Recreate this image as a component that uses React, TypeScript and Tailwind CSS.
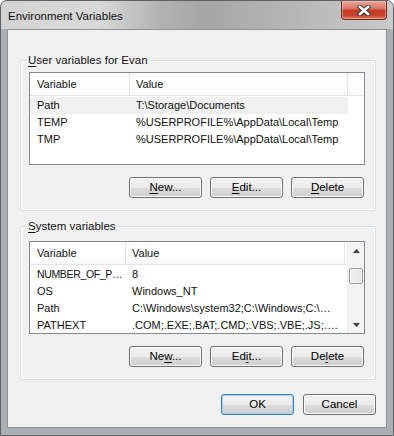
import React from 'react'

type Row = { name: string; value: string; selected?: boolean; tight?: boolean }

const userVars: Row[] = [
  { name: 'Path', value: 'T:\\Storage\\Documents', selected: true },
  { name: 'TEMP', value: '%USERPROFILE%\\AppData\\Local\\Temp' },
  { name: 'TMP', value: '%USERPROFILE%\\AppData\\Local\\Temp' },
]

const systemVars: Row[] = [
  { name: 'NUMBER_OF_P…', value: '8', tight: true },
  { name: 'OS', value: 'Windows_NT' },
  { name: 'Path', value: 'C:\\Windows\\system32;C:\\Windows;C:\\…' },
  { name: 'PATHEXT', value: '.COM;.EXE;.BAT;.CMD;.VBS;.VBE;.JS;….' },
]

function Key({ children }: { children: React.ReactNode }) {
  return <span className="underline underline-offset-[2px]">{children}</span>
}

function Button({ children, primary }: { children: React.ReactNode; primary?: boolean }) {
  return (
    <button
      className={`w-[73px] h-[21px] rounded-[3px] border text-[11.5px] leading-none text-black bg-[linear-gradient(#f2f2f2_0%,#ebebeb_50%,#dddddd_50%,#cfcfcf_100%)] ${
        primary
          ? 'border-[#3c7fb1] shadow-[inset_0_0_0_1px_#9fd7f5]'
          : 'border-[#707070] shadow-[inset_0_0_0_1px_#fbfbfb]'
      }`}
    >
      {children}
    </button>
  )
}

function CloseButton() {
  return (
    <div className="mr-[6px] w-[46px] h-[19px] rounded-b-[4px] border border-t-0 border-[#6e2a1f] bg-[linear-gradient(#eaa597_0%,#d9796a_40%,#c53b22_52%,#c6402a_78%,#e07a5c_100%)] flex items-center justify-center shadow-[inset_0_0_0_1px_rgba(255,220,210,0.45)]">
      <svg width="14" height="11" viewBox="0 0 14 11">
        <path d="M3 2 L11 9 M11 2 L3 9" stroke="#3a3a3a" strokeWidth="4.6" strokeLinecap="square" />
        <path d="M3 2 L11 9 M11 2 L3 9" stroke="#ffffff" strokeWidth="2.6" strokeLinecap="square" />
      </svg>
    </div>
  )
}

function Scrollbar() {
  return (
    <div className="w-[17px] flex flex-col bg-[#f4f4f4] border-l border-[#ececec]">
      <div className="h-[17px] flex items-center justify-center">
        <svg width="7" height="4" viewBox="0 0 7 4">
          <path d="M0 4 L3.5 0 L7 4 Z" fill="#404040" />
        </svg>
      </div>
      <div className="flex-1 px-[1px]">
        <div className="mt-[9px] h-[16px] rounded-[2px] border border-[#979797] bg-[linear-gradient(90deg,#f2f2f2,#e4e4e4)] shadow-[inset_0_0_0_1px_#fafafa]" />
      </div>
      <div className="h-[17px] flex items-center justify-center">
        <svg width="7" height="4" viewBox="0 0 7 4">
          <path d="M0 0 L7 0 L3.5 4 Z" fill="#404040" />
        </svg>
      </div>
    </div>
  )
}

function ListView({
  rows,
  col1,
  col2,
  scroll,
}: {
  rows: Row[]
  col1: string
  col2: string
  scroll?: boolean
}) {
  return (
    <div className="ml-[8px] w-[336px] h-[93px] border border-[#828790] bg-white flex overflow-hidden">
      <div className="flex-1 min-w-0 flex flex-col">
        <div className="h-[23px] shrink-0 flex bg-[linear-gradient(#ffffff_0%,#ffffff_60%,#f7f8f9_100%)] border-b border-[#e5e5e5]">
          <div className={`${col1} shrink-0 border-r border-[#e5e5e5] pl-[7px] flex items-center`}>Variable</div>
          <div className={`${col2} shrink-0 border-r border-[#e5e5e5] pl-[6px] flex items-center`}>Value</div>
          <div className="flex-1" />
        </div>
        <div className="pt-[1px]">
          {rows.map((r) => (
            <div
              key={r.name + r.value}
              className={`h-[17px] flex items-center whitespace-nowrap ${
                r.selected ? 'bg-[#f0f0f0]' : ''
              } ${scroll ? '' : 'w-[318px]'}`}
            >
              <div className={`${col1} shrink-0 pl-[7px] ${r.tight ? 'tracking-[-0.35px] text-[10.5px]' : 'overflow-hidden'}`}>
                {r.name}
              </div>
              <div className={`${col2} shrink-0 pl-[6px] overflow-hidden`}>{r.value}</div>
            </div>
          ))}
        </div>
      </div>
      {scroll && <Scrollbar />}
    </div>
  )
}

function Group({
  title,
  children,
  className,
}: {
  title: React.ReactNode
  children: React.ReactNode
  className: string
}) {
  return (
    <fieldset
      className={`ml-[12px] w-[356px] rounded-[3px] border border-[#d5dfe5] shadow-[inset_0_0_0_1px_#ffffff] pb-[12px] ${className}`}
    >
      <legend className="ml-[6px] px-[1px] leading-[15px] text-[11.5px]">{title}</legend>
      {children}
    </fieldset>
  )
}

function ButtonRow({ children }: { children: React.ReactNode }) {
  return <div className="mt-[12px] mr-[11px] flex justify-end gap-[8px]">{children}</div>
}

export default function App() {
  return (
    <div className="w-[394px] h-[436px] bg-white font-['Liberation_Sans',Arial,sans-serif] text-[11px] text-[#111]">
      <div className="h-full flex flex-col rounded-t-[7px] border border-[#5c6166] bg-[#adb0b3] overflow-hidden">
        <div className="h-[28px] shrink-0 flex items-start justify-between bg-[linear-gradient(90deg,#d3d3d3_0%,#d9d9d9_25%,#b3b3b3_40%,#a6a6a6_52%,#b7b7b7_75%,#cacaca_100%)]">
          <span className="pl-[7px] pt-[8px] leading-[14px] text-[11.5px]">Environment Variables</span>
          <CloseButton />
        </div>
        <div className="flex-1 flex px-[6px] pb-[7px]">
          <div className="flex-1 flex flex-col border border-[#8e9092] bg-[#f0f0f0]">
            <Group className="mt-[23px]" title={<><Key>U</Key>ser variables for Evan</>}>
              <div className="mt-[4px]">
                <ListView rows={userVars} col1="w-[100px]" col2="w-[218px]" />
              </div>
              <ButtonRow>
                <Button><Key>N</Key>ew...</Button>
                <Button><Key>E</Key>dit...</Button>
                <Button><Key>D</Key>elete</Button>
              </ButtonRow>
            </Group>
            <Group className="mt-[8px]" title={<><Key>S</Key>ystem variables</>}>
              <div className="mt-[7px]">
                <ListView rows={systemVars} col1="w-[96px]" col2="w-[219px]" scroll />
              </div>
              <ButtonRow>
                <Button>Ne<Key>w</Key>...</Button>
                <Button>Ed<Key>i</Key>t...</Button>
                <Button>De<Key>l</Key>ete</Button>
              </ButtonRow>
            </Group>
            <div className="mt-[14px] mr-[10px] flex justify-end gap-[9px]">
              <Button primary>OK</Button>
              <Button>Cancel</Button>
            </div>
          </div>
        </div>
      </div>
    </div>
  )
}
